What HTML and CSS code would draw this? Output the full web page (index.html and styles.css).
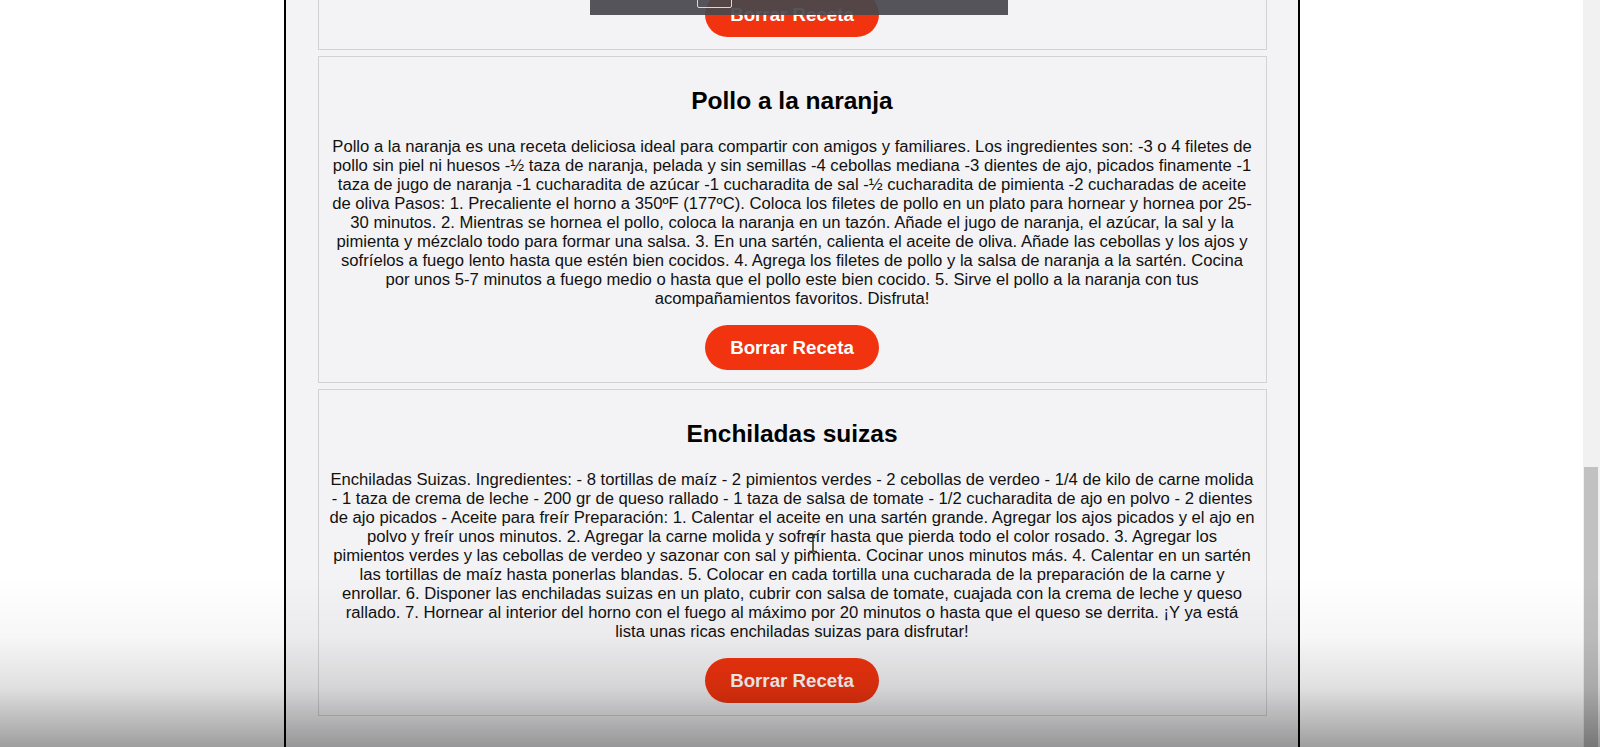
FILE: index.html
```html
<!DOCTYPE html>
<html lang="es">
<head>
<meta charset="utf-8">
<title>Recetas</title>
<link rel="stylesheet" href="styles.css">
</head>
<body>
<div class="page">
  <main class="recipes">
    <section class="card card-partial">
      <button class="btn-delete">Borrar Receta</button>
    </section>
    <section class="card">
      <h2 class="card-title">Pollo a la naranja</h2>
      <p class="card-text">Pollo a la naranja es una receta deliciosa ideal para compartir con amigos y familiares. Los ingredientes son: -3 o 4 filetes de pollo sin piel ni huesos -½ taza de naranja, pelada y sin semillas -4 cebollas mediana -3 dientes de ajo, picados finamente -1 taza de jugo de naranja -1 cucharadita de azúcar -1 cucharadita de sal -½ cucharadita de pimienta -2 cucharadas de aceite de oliva Pasos: 1. Precaliente el horno a 350ºF (177ºC). Coloca los filetes de pollo en un plato para hornear y hornea por 25-30 minutos. 2. Mientras se hornea el pollo, coloca la naranja en un tazón. Añade el jugo de naranja, el azúcar, la sal y la pimienta y mézclalo todo para formar una salsa. 3. En una sartén, calienta el aceite de oliva. Añade las cebollas y los ajos y sofríelos a fuego lento hasta que estén bien cocidos. 4. Agrega los filetes de pollo y la salsa de naranja a la sartén. Cocina por unos 5-7 minutos a fuego medio o hasta que el pollo este bien cocido. 5. Sirve el pollo a la naranja con tus acompañamientos favoritos. Disfruta!</p>
      <button class="btn-delete">Borrar Receta</button>
    </section>
    <section class="card">
      <h2 class="card-title">Enchiladas suizas</h2>
      <p class="card-text">Enchiladas Suizas. Ingredientes: - 8 tortillas de maíz - 2 pimientos verdes - 2 cebollas de verdeo - 1/4 de kilo de carne molida - 1 taza de crema de leche - 200 gr de queso rallado - 1 taza de salsa de tomate - 1/2 cucharadita de ajo en polvo - 2 dientes de ajo picados - Aceite para freír Preparación: 1. Calentar el aceite en una sartén grande. Agregar los ajos picados y el ajo en polvo y freír unos minutos. 2. Agregar la carne molida y sofreír hasta que pierda todo el color rosado. 3. Agregar los pimientos verdes y las cebollas de verdeo y sazonar con sal y pimienta. Cocinar unos minutos más. 4. Calentar en un sartén las tortillas de maíz hasta ponerlas blandas. 5. Colocar en cada tortilla una cucharada de la preparación de la carne y enrollar. 6. Disponer las enchiladas suizas en un plato, cubrir con salsa de tomate, cuajada con la crema de leche y queso rallado. 7. Hornear al interior del horno con el fuego al máximo por 20 minutos o hasta que el queso se derrita. ¡Y ya está lista unas ricas enchiladas suizas para disfrutar!</p>
      <button class="btn-delete">Borrar Receta</button>
    </section>
  </main>
</div>

<div class="scrollbar"><div class="scroll-thumb"></div></div>
<div class="video-top"><span class="video-top-tab"></span></div>
<div class="video-shade"></div>
<svg class="ibeam" width="10" height="20" viewBox="0 0 10 20">
  <path d="M1 1.5h3.2M5.8 1.5H9M5 2v16M1 18.5h3.2M5.8 18.5H9M4 2.3c.6-.3 1.4-.3 2 0M4 17.7c.6.3 1.4.3 2 0" fill="none" stroke="#3b3a1c" stroke-width="1.6"/>
</svg>
</body>
</html>
```

FILE: styles.css
```css
html, body {
  margin: 0;
  padding: 0;
  background: #ffffff;
  overflow: hidden;
  height: 100%;
}

body {
  font-family: "Liberation Sans", Arial, sans-serif;
  color: #111;
}

.page {
  margin-right: 17px;
}

.recipes {
  width: 949px;
  margin: -20px auto 0;
  padding: 0 31px 60px 32px;
  border-left: 2px solid #000;
  border-right: 2px solid #000;
  background: #f3f3f5;
  display: flex;
  flex-direction: column;
  gap: 6px;
}

.card {
  border: 1px solid #d2d2d5;
  background: #f3f3f5;
  padding: 10px 10.75px 12px;
  text-align: center;
}

.card-partial {
  padding-top: 11px;
}

.card-title {
  font-size: 24.5px;
  font-weight: bold;
  line-height: 28px;
  margin: 20px 0 22px;
  color: #000;
}

.card-text {
  font-size: 16.65px;
  line-height: 19px;
  margin: 0 0 17px;
  color: #111;
}

.btn-delete {
  display: block;
  margin: 0 auto;
  height: 45px;
  padding: 0 25px;
  border: none;
  border-radius: 23px;
  background: #f1340f;
  color: #fff;
  font-family: "Liberation Sans", Arial, sans-serif;
  font-size: 18.7px;
  font-weight: bold;
  cursor: pointer;
}

/* fake browser scrollbar */
.scrollbar {
  position: fixed;
  top: 0;
  right: 0;
  width: 17px;
  height: 100%;
  background: #f1f1f1;
}

.scroll-thumb {
  position: absolute;
  top: 467px;
  left: 1px;
  right: 2px;
  bottom: 0;
  background: #c1c1c1;
}

/* video player overlays */
.video-top {
  position: fixed;
  top: 0;
  left: 590px;
  width: 418px;
  height: 15px;
  background: rgba(70, 71, 76, 0.92);
}

.video-top-tab {
  position: absolute;
  left: 107px;
  top: -2px;
  width: 33px;
  height: 8px;
  border: 1px solid #d8d8d8;
  border-radius: 0 0 2px 2px;
}

.video-shade {
  position: fixed;
  left: 0;
  right: 0;
  bottom: 0;
  height: 170px;
  background: linear-gradient(to bottom, rgba(0,0,0,0) 0%, rgba(0,0,0,0.03) 35%, rgba(0,0,0,0.12) 65%, rgba(0,0,0,0.38) 100%);
  pointer-events: none;
}

.ibeam {
  position: fixed;
  left: 808px;
  top: 533px;
}
```
